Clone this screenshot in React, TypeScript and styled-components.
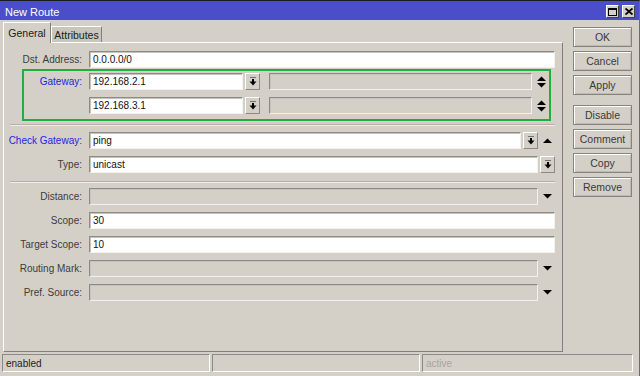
import React from "react";
import styled, { createGlobalStyle } from "styled-components";

const GlobalStyle = createGlobalStyle`
  html, body {
    margin: 0;
    padding: 0;
    background: #d4d0c8;
  }
  * {
    box-sizing: border-box;
  }
`;

const Window = styled.div`
  width: 640px;
  height: 376px;
  display: flex;
  flex-direction: column;
  background: #d4d0c8;
  border-top: 1px solid #1c1c1c;
  border-right: 1px solid #6c6c6c;
  font-family: "Liberation Sans", Arial, sans-serif;
  font-size: 10px;
  color: #222;
  overflow: hidden;
`;

const TitleBar = styled.div`
  height: 19px;
  flex: none;
  background: #4a4ec9;
  display: flex;
  align-items: flex-end;
  justify-content: space-between;
  padding: 0 4px 1px 5px;
`;

const Title = styled.span`
  color: #fff;
  font-size: 11px;
  line-height: 13px;
`;

const TitleButtons = styled.div`
  display: flex;
  gap: 3px;
  padding-bottom: 1px;
`;

const TitleButton = styled.div`
  width: 13px;
  height: 13px;
  background: #d4d0c8;
  border: 1px solid;
  border-color: #fff #404040 #404040 #fff;
  display: flex;
  align-items: center;
  justify-content: center;
`;

const Body = styled.div`
  flex: 1;
  display: flex;
  min-height: 0;
`;

const Main = styled.div`
  width: 560px;
  margin-left: 3px;
  padding-top: 3px;
  display: flex;
  flex-direction: column;
`;

const Tabs = styled.div`
  height: 20px;
  display: flex;
  align-items: flex-end;
  position: relative;
  z-index: 1;
  margin-bottom: -1px;
`;

const Tab = styled.div<{ $active?: boolean }>`
  height: ${(p) => (p.$active ? "21px" : "16px")};
  width: ${(p) => (p.$active ? "48px" : "51px")};
  margin-bottom: ${(p) => (p.$active ? "0" : "1px")};
  background: ${(p) => (p.$active ? "#d4d0c8" : "#c9c6be")};
  border: 1px solid;
  border-bottom: none;
  border-color: #fff #808080 #808080 #fff;
  display: flex;
  align-items: center;
  justify-content: center;
  font-size: 10.5px;
  color: #202020;
  padding-top: ${(p) => (p.$active ? "0" : "1px")};
`;

const Panel = styled.div`
  flex: 1;
  border: 1px solid;
  border-color: #fff #808080 #808080 #fff;
  padding: 7px 7px 0 0;
  display: flex;
  flex-direction: column;
`;

const Row = styled.div<{ $mt?: number }>`
  height: 17px;
  display: flex;
  align-items: center;
  margin-top: ${(p) => p.$mt ?? 7}px;
`;

const Label = styled.div<{ $blue?: boolean; $w?: number }>`
  width: ${(p) => p.$w ?? 79}px;
  flex: none;
  text-align: right;
  padding-right: 1px;
  margin-right: 6px;
  color: ${(p) => (p.$blue ? "#2424e6" : "#3c3c3c")};
  white-space: nowrap;
`;

const Field = styled.div<{ $disabled?: boolean; $w?: number }>`
  height: 17px;
  ${(p) => (p.$w ? `width: ${p.$w}px; flex: none;` : "flex: 1;")}
  background: ${(p) => (p.$disabled ? "#d4d0c8" : "#fff")};
  border: 1px solid;
  border-color: #8c8a85 #f2f1ee #f2f1ee #8c8a85;
  box-shadow: inset 1px 1px 0 #c6c3bc;
  padding: 0 3px;
  display: flex;
  align-items: center;
  color: #111;
  font-size: 10px;
  white-space: nowrap;
`;

const DropButton = styled.div`
  width: 15px;
  height: 17px;
  flex: none;
  margin-left: 2px;
  background: #d4d0c8;
  border: 1px solid;
  border-color: #fff #8c8a85 #8c8a85 #fff;
  display: flex;
  align-items: center;
  justify-content: center;
`;

const ArrowSlot = styled.div`
  width: 17px;
  height: 17px;
  flex: none;
  display: flex;
  align-items: center;
  justify-content: center;
  padding-left: 1px;
`;

const Spacer = styled.div<{ $w: number }>`
  width: ${(p) => p.$w}px;
  flex: none;
`;

const GatewayBox = styled.div`
  margin: 1px 4px 0 18px;
  border: 2px solid #1fae3f;
  padding: 2px 0 5px 0;
  display: flex;
  flex-direction: column;
`;

const Separator = styled.div<{ $mt: number }>`
  margin: ${(p) => p.$mt}px 0 0 6px;
  height: 2px;
  border-top: 1px solid #b3b0a8;
  border-bottom: 1px solid #efeee9;
`;

const ButtonColumn = styled.div`
  margin-left: 10px;
  padding-top: 7px;
  display: flex;
  flex-direction: column;
  gap: 4px;
`;

const SideButton = styled.div<{ $gapBefore?: boolean }>`
  width: 59px;
  height: 20px;
  margin-top: ${(p) => (p.$gapBefore ? "6px" : "0")};
  border: 1px solid #86847f;
  box-shadow: inset 1px 1px 0 #fff, inset -1px -1px 0 #bdbab3;
  background: #d4d0c8;
  display: flex;
  align-items: center;
  justify-content: center;
  font-size: 10.5px;
  color: #3a3a3a;
`;

const StatusBar = styled.div`
  height: 18px;
  margin: 2px 0 4px 2px;
  display: flex;
  gap: 2px;
`;

const StatusCell = styled.div<{ $w: number; $dim?: boolean }>`
  width: ${(p) => p.$w}px;
  height: 18px;
  border: 1px solid;
  border-color: #8c8a85 #fff #fff #8c8a85;
  padding: 0 3px;
  display: flex;
  align-items: center;
  font-size: 10px;
  color: ${(p) => (p.$dim ? "#a8a59f" : "#222")};
`;

const DropIcon = () => (
  <svg width="8" height="9" viewBox="0 0 8 9">
    <rect x="1" y="0" width="6" height="1" fill="#707070" />
    <rect x="3" y="2" width="2" height="3" fill="#000" />
    <polygon points="0.5,4.5 7.5,4.5 4,8.5" fill="#000" />
  </svg>
);

const UpDownIcon = () => (
  <svg width="9" height="12" viewBox="0 0 9 12">
    <polygon points="0,5 9,5 4.5,0.5" fill="#000" />
    <polygon points="0,7 9,7 4.5,11.5" fill="#000" />
  </svg>
);

const DownIcon = () => (
  <svg width="9" height="5" viewBox="0 0 9 5">
    <polygon points="0,0 9,0 4.5,4.5" fill="#000" />
  </svg>
);

const UpIcon = () => (
  <svg width="9" height="5" viewBox="0 0 9 5">
    <polygon points="0,5 9,5 4.5,0.5" fill="#000" />
  </svg>
);

const MaxIcon = () => (
  <svg width="9" height="8" viewBox="0 0 9 8">
    <rect x="0.5" y="0.5" width="8" height="7" fill="none" stroke="#000" />
    <rect x="0" y="0" width="9" height="2" fill="#000" />
  </svg>
);

const CloseIcon = () => (
  <svg width="8" height="7" viewBox="0 0 8 7">
    <path d="M0.5 0.5 L7.5 6.5 M7.5 0.5 L0.5 6.5" stroke="#000" strokeWidth="1.8" />
  </svg>
);

const buttons = ["OK", "Cancel", "Apply", "Disable", "Comment", "Copy", "Remove"];

const App = () => {
  return (
    <Window>
      <GlobalStyle />
      <TitleBar>
        <Title>New Route</Title>
        <TitleButtons>
          <TitleButton>
            <MaxIcon />
          </TitleButton>
          <TitleButton>
            <CloseIcon />
          </TitleButton>
        </TitleButtons>
      </TitleBar>

      <Body>
        <Main>
          <Tabs>
            <Tab $active>General</Tab>
            <Tab>Attributes</Tab>
          </Tabs>
          <Panel>
            <Row $mt={1}>
              <Label>Dst. Address:</Label>
              <Field>0.0.0.0/0</Field>
            </Row>

            <GatewayBox>
              <Row $mt={0}>
                <Label $blue $w={59}>Gateway:</Label>
                <Field $w={154}>192.168.2.1</Field>
                <DropButton>
                  <DropIcon />
                </DropButton>
                <Spacer $w={9} />
                <Field $disabled />
                <ArrowSlot>
                  <UpDownIcon />
                </ArrowSlot>
              </Row>
              <Row>
                <Label $w={59} />
                <Field $w={154}>192.168.3.1</Field>
                <DropButton>
                  <DropIcon />
                </DropButton>
                <Spacer $w={9} />
                <Field $disabled />
                <ArrowSlot>
                  <UpDownIcon />
                </ArrowSlot>
              </Row>
            </GatewayBox>

            <Separator $mt={3} />

            <Row $mt={6}>
              <Label $blue>Check Gateway:</Label>
              <Field>ping</Field>
              <DropButton>
                <DropIcon />
              </DropButton>
              <ArrowSlot>
                <UpIcon />
              </ArrowSlot>
            </Row>
            <Row>
              <Label>Type:</Label>
              <Field>unicast</Field>
              <DropButton>
                <DropIcon />
              </DropButton>
            </Row>

            <Separator $mt={8} />

            <Row $mt={5}>
              <Label>Distance:</Label>
              <Field $disabled />
              <ArrowSlot>
                <DownIcon />
              </ArrowSlot>
            </Row>
            <Row>
              <Label>Scope:</Label>
              <Field>30</Field>
            </Row>
            <Row>
              <Label>Target Scope:</Label>
              <Field>10</Field>
            </Row>
            <Row>
              <Label>Routing Mark:</Label>
              <Field $disabled />
              <ArrowSlot>
                <DownIcon />
              </ArrowSlot>
            </Row>
            <Row>
              <Label>Pref. Source:</Label>
              <Field $disabled />
              <ArrowSlot>
                <DownIcon />
              </ArrowSlot>
            </Row>
          </Panel>
        </Main>

        <ButtonColumn>
          {buttons.map((b) => (
            <SideButton key={b} $gapBefore={b === "Disable"}>
              {b}
            </SideButton>
          ))}
        </ButtonColumn>
      </Body>

      <StatusBar>
        <StatusCell $w={208}>enabled</StatusCell>
        <StatusCell $w={208} />
        <StatusCell $w={211} $dim>
          active
        </StatusCell>
      </StatusBar>
    </Window>
  );
};

export default App;
